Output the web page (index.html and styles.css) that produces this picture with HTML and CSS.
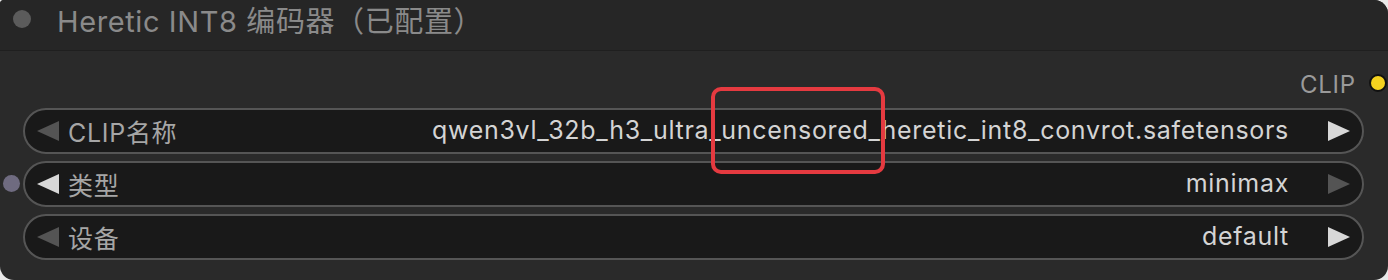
FILE: index.html
```html
<!DOCTYPE html>
<html>
<head>
<meta charset="utf-8">
<link rel="stylesheet" href="styles.css">
</head>
<body>
<div class="node">
  <div class="title-bar">
    <span class="title-dot"></span>
    <span class="title">Heretic INT8 编码器（已配置）</span>
  </div>
  <div class="node-body">
    <div class="outputs">
      <span class="out-label">CLIP</span>
      <span class="out-dot"></span>
    </div>
    <div class="widgets">
      <div class="widget">
        <span class="arrow left dim"></span>
        <span class="label">CLIP名称</span>
        <span class="value">qwen3vl_32b_h3_ultra_uncensored_heretic_int8_convrot.safetensors</span>
        <span class="arrow right"></span>
      </div>
      <div class="widget">
        <span class="in-dot"></span>
        <span class="arrow left"></span>
        <span class="label">类型</span>
        <span class="value">minimax</span>
        <span class="arrow right dim"></span>
      </div>
      <div class="widget">
        <span class="arrow left dim"></span>
        <span class="label">设备</span>
        <span class="value">default</span>
        <span class="arrow right"></span>
      </div>
    </div>
  </div>
  <div class="highlight"></div>
</div>
</body>
</html>
```

FILE: styles.css
```css
html, body {
  margin: 0;
  padding: 0;
  background: #e9e9e9;
}
body {
  width: 1388px;
  height: 280px;
  overflow: hidden;
  font-family: "Inter", "Noto Sans CJK SC", sans-serif;
}
.node {
  position: relative;
  width: 1388px;
  height: 280px;
  background: #2a2a2a;
  border-radius: 4px 14px 14px 14px;
  overflow: hidden;
}
.title-bar {
  height: 50px;
  background: #262626;
  border-bottom: 1px solid #1f1f1f;
  display: flex;
  align-items: center;
}
.title-dot {
  width: 18px;
  height: 18px;
  border-radius: 50%;
  background: #5b5b5b;
  margin-left: 13px;
  margin-top: -12px;
  flex: none;
}
.title {
  margin-left: 26px;
  margin-top: -12px;
  color: #8a8a8a;
  font-size: 29px;
  letter-spacing: 0.6px;
  white-space: nowrap;
}
.node-body {
  display: flex;
  flex-direction: column;
}
.outputs {
  height: 30px;
  margin-top: 18px;
  display: flex;
  justify-content: flex-end;
  align-items: center;
  padding-right: 1px;
}
.out-label {
  color: #9a9a9a;
  font-size: 24px;
  letter-spacing: 0.8px;
  margin-right: 13px;
}
.out-dot {
  width: 14px;
  height: 14px;
  border-radius: 50%;
  background: #f5d21f;
  border: 2px solid #111;
  margin-top: -3px;
}
.widgets {
  margin-top: 9px;
  margin-left: 23px;
  width: 1341px;
  display: flex;
  flex-direction: column;
  gap: 7px;
}
.widget {
  position: relative;
  height: 42px;
  border: 2px solid #555;
  border-radius: 23px;
  background: #191919;
  display: flex;
  align-items: center;
  padding: 0 12px 0 12px;
  font-size: 25px;
  letter-spacing: 0.7px;
}
.arrow {
  width: 0;
  height: 0;
  border-top: 10.5px solid transparent;
  border-bottom: 10.5px solid transparent;
  flex: none;
}
.arrow.left {
  border-right: 22px solid #d8d8d8;
}
.arrow.right {
  border-left: 22px solid #d8d8d8;
}
.arrow.left.dim {
  border-right-color: #545454;
}
.arrow.right.dim {
  border-left-color: #545454;
}
.label {
  margin-left: 9px;
  color: #a6a6a6;
  white-space: nowrap;
}
.value {
  margin-left: auto;
  margin-right: 39px;
  margin-top: -2px;
  color: #d4d4d4;
  white-space: nowrap;
}
.in-dot {
  position: absolute;
  left: -22px;
  top: 12px;
  width: 17px;
  height: 17px;
  border-radius: 50%;
  background: #6f6b80;
}
.highlight {
  position: absolute;
  left: 711px;
  top: 87px;
  width: 166px;
  height: 79px;
  border: 4px solid #e53a40;
  border-radius: 10px;
}
```
